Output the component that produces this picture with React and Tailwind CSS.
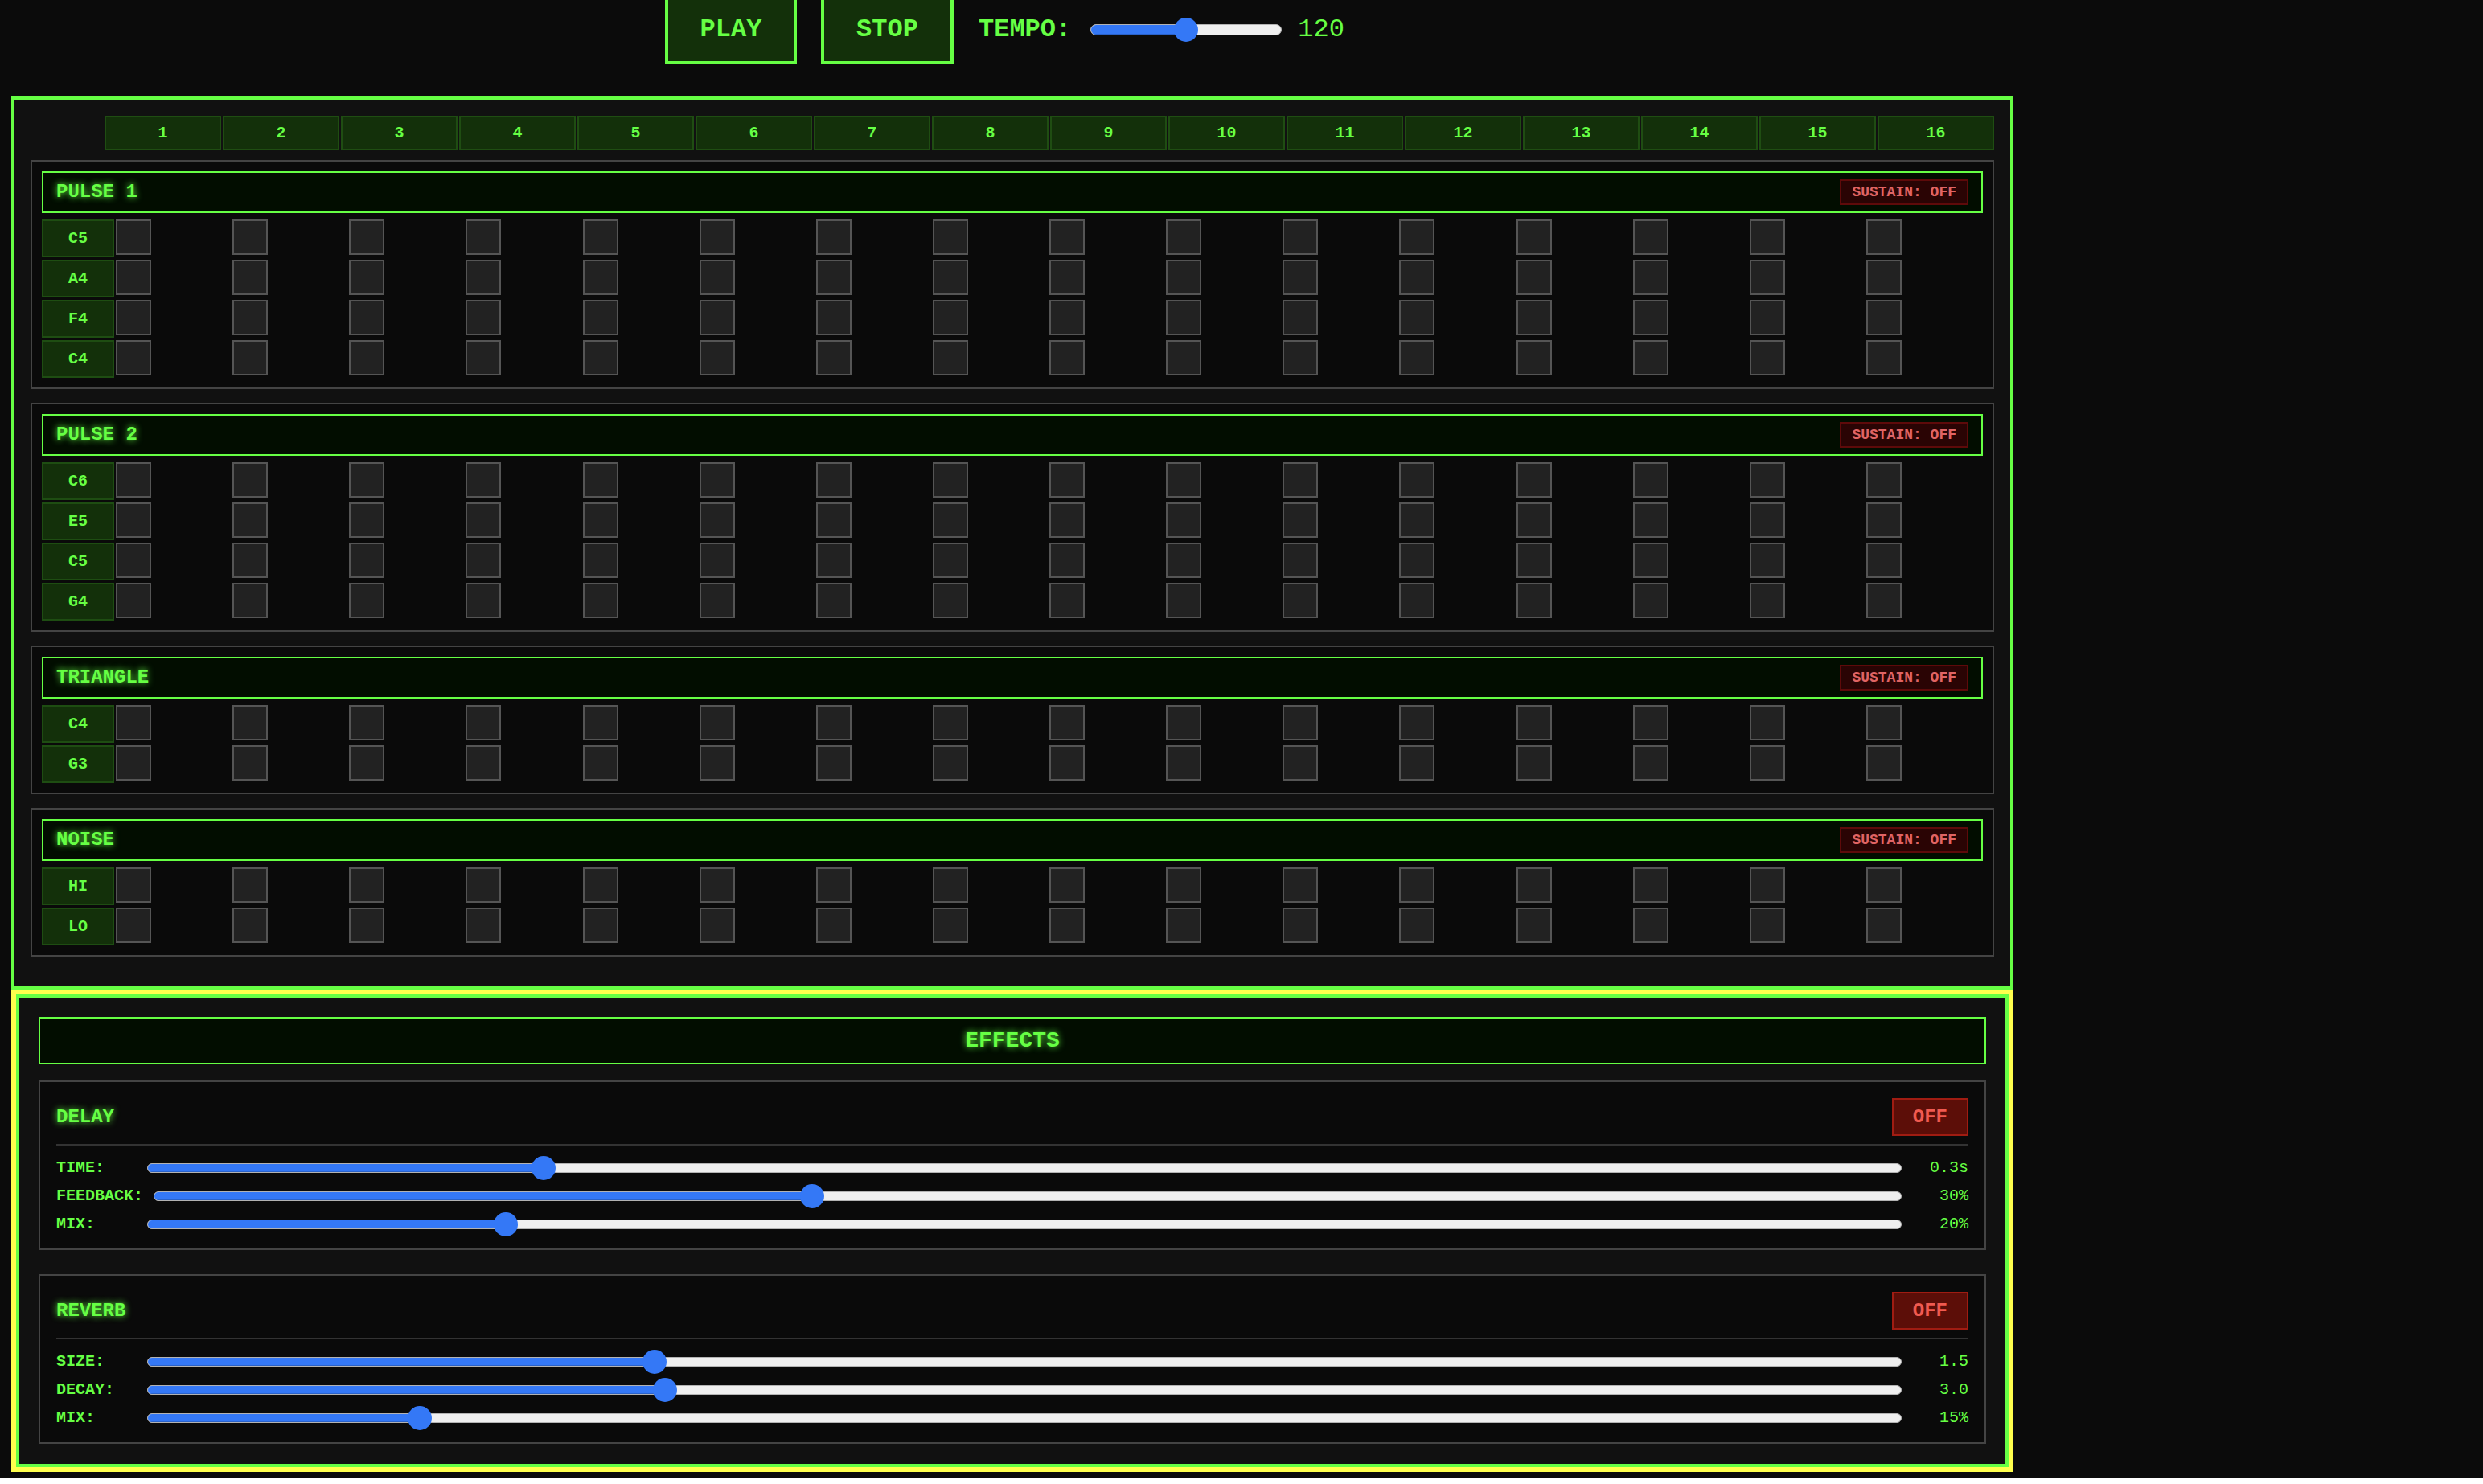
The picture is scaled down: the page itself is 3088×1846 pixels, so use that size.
import React from "react";

const MONO = "font-['Liberation_Mono','Courier_New',monospace]";

function Slider({ pct, trackH = "h-[12px]" }) {
  const fill = `calc(${pct} * (100% - 32px) + 16px)`;
  const left = `calc(${pct} * (100% - 32px) + 1px)`;
  return (
    <div className="relative flex-1 h-[30px] flex items-center">
      <div className={`w-full ${trackH} rounded-full bg-[#efefef] border border-[#b3b3b3] overflow-hidden`}>
        <div className="h-full bg-[#3478f6] border-b border-[#2a62c9]" style={{ width: fill }} />
      </div>
      <div
        className="absolute top-0 w-[30px] h-[30px] rounded-full bg-[#3478f6]"
        style={{ left }}
      />
    </div>
  );
}

function TrackSection({ name, notes }) {
  return (
    <div className="border-2 border-[#444] bg-[#0a0a0a] p-3 mb-[17px]">
      <div className="h-[52px] border-2 border-[#66ff44] bg-[#020d00] flex items-center justify-between pl-4 pr-4 mb-2">
        <span className="text-[24px] font-bold text-[#66ff44] [text-shadow:0_0_8px_#66ff44]">{name}</span>
        <span className="h-[32px] px-[13px] flex items-center border-2 border-[#5e0a0a] bg-[#2a0404] text-[18px] font-bold text-[#e06464]">
          SUSTAIN: OFF
        </span>
      </div>
      <div className="flex flex-col gap-[3px]">
        {notes.map((n) => (
          <div key={n} className="flex gap-[2px]">
            <div className="w-[90px] h-[47px] shrink-0 bg-[#13300a] border-2 border-[#1e4d12] flex items-center justify-center text-[20px] font-bold text-[#66ff44]">
              {n}
            </div>
            <div className="flex-1 grid grid-cols-[repeat(16,minmax(0,1fr))]">
              {Array.from({ length: 16 }).map((_, i) => (
                <div key={i} className="w-[44px] h-[44px] border-2 border-[#555] bg-[#222]" />
              ))}
            </div>
          </div>
        ))}
      </div>
    </div>
  );
}

function EffectBox({ name, params, last }) {
  return (
    <div className={`border-2 border-[#444] bg-[#0a0a0a] px-5 pt-5 pb-[15px] ${last ? "" : "mb-[30px]"}`}>
      <div className="flex items-center justify-between pb-[10px] border-b-2 border-[#333]">
        <span className="text-[24px] font-bold text-[#66ff44] [text-shadow:0_0_8px_#66ff44]">{name}</span>
        <span className="h-[47px] px-6 flex items-center border-2 border-[#a01c12] bg-[#5c0e08] text-[24px] font-bold text-[#f05a50]">
          OFF
        </span>
      </div>
      <div className="mt-[13px] flex flex-col gap-[5px]">
        {params.map(([label, pct, value]) => (
          <div key={label} className="flex items-center h-[30px]">
            <span className="min-w-[100px] mr-[13px] text-[20px] font-bold text-[#66ff44]">{label}</span>
            <Slider pct={pct} />
            <span className="w-[83px] shrink-0 text-right text-[20px] text-[#66ff44]">{value}</span>
          </div>
        ))}
      </div>
    </div>
  );
}

export default function App() {
  const sections = [
    ["PULSE 1", ["C5", "A4", "F4", "C4"]],
    ["PULSE 2", ["C6", "E5", "C5", "G4"]],
    ["TRIANGLE", ["C4", "G3"]],
    ["NOISE", ["HI", "LO"]],
  ];
  return (
    <div className={`min-h-screen bg-[#0b0b0b] ${MONO} text-[#66ff44]`}>
      <div className="w-[2490px] ml-[14px]">
        {/* top bar */}
        <div className="-mt-[7px] h-[87px] flex items-end pl-[813px] mb-[40px]">
          <button className="w-[164px] h-[87px] border-4 border-[#66ff44] bg-[#13300a] text-[32px] font-bold text-[#66ff44]">
            PLAY
          </button>
          <button className="ml-[30px] w-[165px] h-[87px] border-4 border-[#66ff44] bg-[#13300a] text-[32px] font-bold text-[#66ff44]">
            STOP
          </button>
          <div className="ml-[31px] h-[87px] flex items-center pt-[1px]">
            <span className="text-[32px] font-bold text-[#66ff44]">TEMPO:</span>
            <div className="ml-[24px] w-[238px] flex">
              <Slider pct={0.5} trackH="h-[14px]" />
            </div>
            <span className="ml-[20px] text-[32px] text-[#66ff44]">120</span>
          </div>
        </div>

        {/* sequencer */}
        <div className="border-4 border-[#66ff44] bg-[#111] p-5">
          <div className="ml-[92px] flex gap-[2px] mb-3">
            {Array.from({ length: 16 }).map((_, i) => (
              <div
                key={i}
                className="flex-1 h-[43px] bg-[#13300a] border-2 border-[#1f4d12] flex items-center justify-center text-[20px] font-bold text-[#66ff44]"
              >
                {i + 1}
              </div>
            ))}
          </div>
          {sections.map(([name, notes]) => (
            <TrackSection key={name} name={name} notes={notes} />
          ))}
        </div>

        {/* effects */}
        <div className="border-[6px] border-[#ffff4d]">
          <div className="border-4 border-[#66ff44] bg-[#111] px-6 pt-6 pb-[25px]">
            <div className="h-[59px] border-2 border-[#66ff44] bg-[#020d00] flex items-center justify-center mb-5">
              <span className="text-[28px] font-bold text-[#66ff44] [text-shadow:0_0_8px_#66ff44]">EFFECTS</span>
            </div>
            <EffectBox
              name="DELAY"
              params={[
                ["TIME:", 0.222, "0.3s"],
                ["FEEDBACK:", 0.375, "30%"],
                ["MIX:", 0.2, "20%"],
              ]}
            />
            <EffectBox
              name="REVERB"
              last
              params={[
                ["SIZE:", 0.286, "1.5"],
                ["DECAY:", 0.292, "3.0"],
                ["MIX:", 0.15, "15%"],
              ]}
            />
          </div>
        </div>
      </div>
    </div>
  );
}
